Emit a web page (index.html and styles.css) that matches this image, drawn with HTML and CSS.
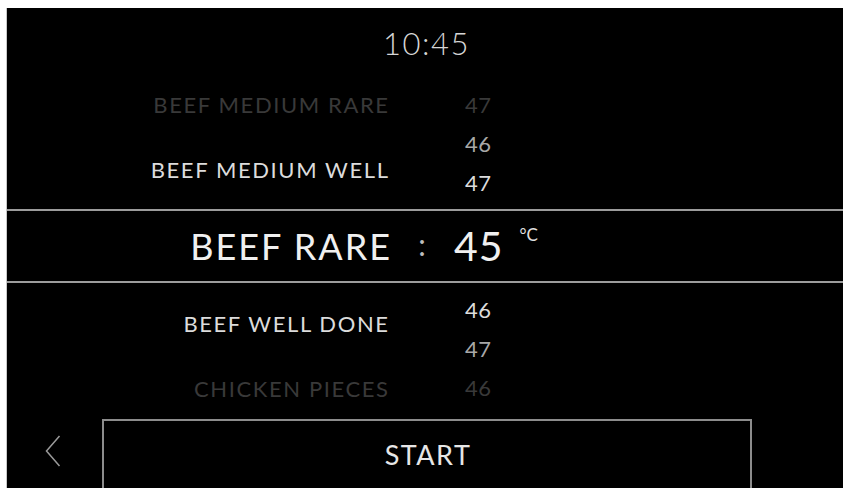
FILE: index.html
```html
<!DOCTYPE html>
<html>
<head>
<meta charset="utf-8">
<link rel="stylesheet" href="styles.css">
</head>
<body>
<div class="screen">
  <div class="header"><span class="time">10:45</span></div>

  <div class="picker picker-upper">
    <div class="names names-upper">
      <div class="item faded">BEEF MEDIUM RARE</div>
      <div class="item bright">BEEF MEDIUM WELL</div>
    </div>
    <div class="nums">
      <div class="num faded">47</div>
      <div class="num mid">46</div>
      <div class="num bright">47</div>
    </div>
  </div>

  <div class="selected">
    <div class="sel-name">BEEF RARE</div>
    <div class="sel-colon">:</div>
    <div class="sel-value"><span class="sel-num">45</span><span class="sel-unit">°C</span></div>
  </div>

  <div class="picker picker-lower">
    <div class="names names-lower">
      <div class="item bright">BEEF WELL DONE</div>
      <div class="item faded">CHICKEN PIECES</div>
    </div>
    <div class="nums">
      <div class="num bright">46</div>
      <div class="num mid">47</div>
      <div class="num faded">46</div>
    </div>
  </div>

  <div class="footer">
    <div class="back">
      <svg class="chev" width="16" height="32" viewBox="0 0 16 32"><polyline points="14.5,1 1.5,16 14.5,31" fill="none" stroke="#9a9a9a" stroke-width="1.5"/></svg>
    </div>
    <div class="start">START</div>
  </div>
</div>
</body>
</html>
```

FILE: styles.css
```css
html, body {
  margin: 0;
  padding: 0;
  background: #ffffff;
}
body {
  font-family: "Lato", "Open Sans", sans-serif;
}
.screen {
  margin: 8px 3px 2px 7px;
  width: 836px;
  height: 480px;
  background: #000;
  display: flex;
  flex-direction: column;
  overflow: hidden;
  box-shadow: -1px 0 0 #c8c8c8;
}
.header {
  height: 70px;
  display: flex;
  align-items: center;
  justify-content: center;
}
.time {
  color: #d6d6d6;
  font-size: 31px;
  font-weight: 300;
  letter-spacing: 1.5px;
  margin-left: 3px;
}
.picker {
  display: grid;
  grid-template-columns: 381px 1fr;
}
.picker-upper { height: 131px; }
.picker-lower { height: 136px; }
.names {
  display: flex;
  flex-direction: column;
  align-items: flex-end;
  gap: 35px;
}
.names-upper { padding-top: 12px; }
.names-lower { padding-top: 26px; }
.item {
  font-size: 22px;
  line-height: 30px;
  letter-spacing: 1.6px;
  margin-right: -1.6px;
  white-space: nowrap;
}
.nums {
  display: flex;
  flex-direction: column;
  gap: 9px;
  padding-top: 12px;
  padding-left: 77px;
}
.num {
  font-size: 22px;
  line-height: 30px;
  letter-spacing: 0.5px;
}
.bright { color: #dcdcdc; }
.mid { color: #a8a8a8; }
.faded { color: #393939; }

.selected {
  border-top: 2px solid #9c9c9c;
  border-bottom: 2px solid #9c9c9c;
  height: 70px;
  display: grid;
  grid-template-columns: 383px 64px 1fr;
  align-items: center;
  color: #f0f0f0;
}
.sel-name {
  text-align: right;
  font-size: 36px;
  letter-spacing: 2px;
  margin-right: -2px;
  white-space: nowrap;
}
.sel-colon {
  text-align: center;
  font-size: 30px;
  color: #bdbdbd;
  margin-top: -4px;
}
.sel-value {
  display: flex;
  align-items: flex-start;
}
.sel-num {
  font-size: 41px;
  line-height: 48px;
  letter-spacing: 1px;
}
.sel-unit {
  font-size: 17px;
  margin-left: 16px;
  margin-top: 2px;
  color: #e0e0e0;
}

.footer {
  flex: 1;
  display: flex;
}
.back {
  width: 95px;
  display: flex;
  align-items: center;
  padding-left: 38px;
  box-sizing: border-box;
}
.chev {
  display: block;
  margin-bottom: 6px;
}
.start {
  width: 650px;
  box-sizing: border-box;
  border: 2px solid #8c8c8c;
  border-bottom: none;
  display: flex;
  align-items: center;
  justify-content: center;
  color: #e6e6e6;
  font-size: 27px;
  letter-spacing: 1.5px;
  padding-left: 2px;
}
```
